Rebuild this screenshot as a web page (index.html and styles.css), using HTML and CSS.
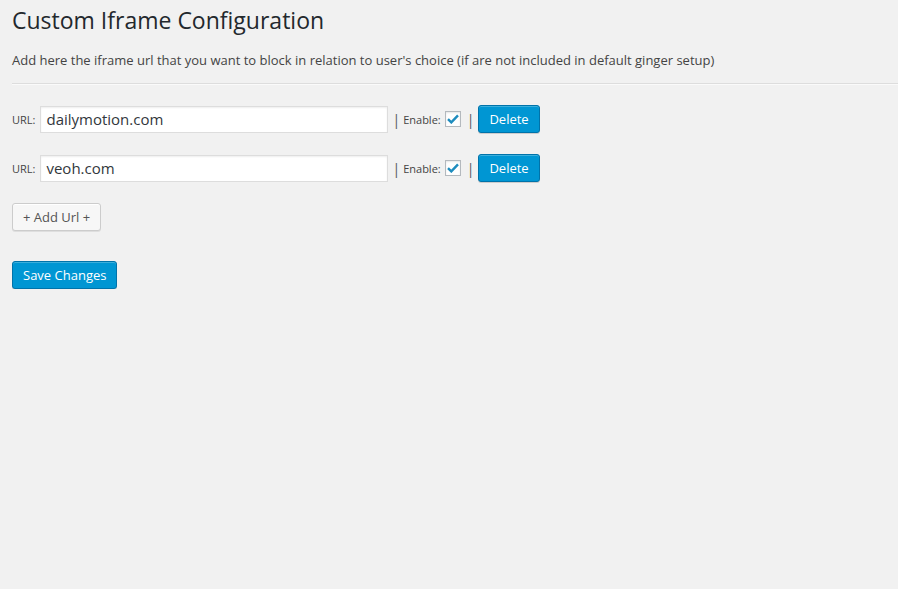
FILE: index.html
```html
<!DOCTYPE html>
<html lang="en">
<head>
    <meta charset="UTF-8">
    <title>Custom Iframe Configuration</title>
    <link rel="stylesheet" href="styles.css">
</head>
<body>

<div class="wrap">
    <h2 class="title">Custom Iframe Configuration</h2>
    <p class="desc">Add here the iframe url that you want to block in relation to user's choice (if are not included in default ginger setup)</p>
    <hr class="sep">

    <form id="iframes">
        <div class="url-row">
            <label class="lbl">URL:</label>
            <input type="text" class="url-input" value="dailymotion.com">
            <span class="pipe">|</span>
            <label class="lbl">Enable:</label>
            <span class="check"><svg width="12" height="10" viewBox="0 0 12 10"><path d="M1 5.2 L4.3 8.4 L11 1.4" fill="none" stroke="#1e8cbe" stroke-width="2.4"/></svg></span>
            <span class="pipe pipe-end">|</span>
            <button type="button" class="btn btn-primary">Delete</button>
        </div>

        <div class="url-row">
            <label class="lbl">URL:</label>
            <input type="text" class="url-input" value="veoh.com">
            <span class="pipe">|</span>
            <label class="lbl">Enable:</label>
            <span class="check"><svg width="12" height="10" viewBox="0 0 12 10"><path d="M1 5.2 L4.3 8.4 L11 1.4" fill="none" stroke="#1e8cbe" stroke-width="2.4"/></svg></span>
            <span class="pipe pipe-end">|</span>
            <button type="button" class="btn btn-primary">Delete</button>
        </div>

        <button type="button" class="btn btn-add">+ Add Url +</button>
        <div class="submit">
            <button type="button" class="btn btn-primary">Save Changes</button>
        </div>
    </form>
</div>

</body>
</html>
```

FILE: styles.css
```css
body {
    margin: 0;
    background: #f1f1f1;
    color: #444;
    font-family: "Open Sans", sans-serif;
    font-size: 13px;
}

.wrap {
    padding: 0 0 0 12px;
}

.title {
    margin: 0;
    padding: 6px 0 0;
    font-size: 23px;
    font-weight: 400;
    line-height: 29px;
    color: #23282d;
}

.desc {
    margin: 16px 0 0;
    line-height: 18px;
}

.sep {
    margin: 14px 0 0;
    border: 0;
    border-top: 1px solid #ddd;
    border-bottom: 1px solid #fafafa;
}

#iframes {
    padding-top: 20px;
}

.url-row {
    display: flex;
    align-items: center;
    height: 28px;
    margin-bottom: 21px;
}

.lbl {
    font-size: 11px;
    color: #444;
}

.url-input {
    width: 348px;
    height: 27px;
    margin: 0 4px 0 5px;
    padding: 0 5px;
    box-sizing: border-box;
    border: 1px solid #ddd;
    box-shadow: inset 0 1px 2px rgba(0,0,0,.07);
    background: #fff;
    font-family: "Open Sans", sans-serif;
    font-size: 15px;
    color: #32373c;
}

.pipe {
    color: #50575e;
    font-size: 14px;
    margin-right: 3px;
}

.pipe-end {
    margin: 0 4px 0 6px;
}

.check {
    display: inline-flex;
    align-items: center;
    justify-content: center;
    width: 16px;
    height: 16px;
    margin-left: 4px;
    box-sizing: border-box;
    border: 1px solid #b4b9be;
    background: #fff;
    box-shadow: inset 0 1px 2px rgba(0,0,0,.1);
}

.btn {
    height: 28px;
    padding: 0 10px 1px;
    border-radius: 3px;
    font-family: "Open Sans", sans-serif;
    font-size: 13px;
    cursor: pointer;
}

.btn-primary {
    background: #0096d3;
    border: 1px solid #0073aa;
    color: #fff;
    box-shadow: inset 0 1px 0 rgba(120,200,230,.5), 0 1px 0 rgba(0,0,0,.15);
}

.btn-add {
    display: block;
    background: #f7f7f7;
    border: 1px solid #ccc;
    color: #555;
    box-shadow: inset 0 1px 0 #fff, 0 1px 0 rgba(0,0,0,.08);
}

.submit {
    padding-top: 30px;
}
```
